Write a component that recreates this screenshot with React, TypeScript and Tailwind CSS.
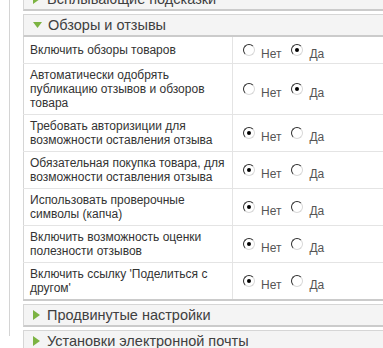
import React from "react";

type Row = { lines: string[]; yes: boolean };

const rows: Row[] = [
  { lines: ["Включить обзоры товаров"], yes: true },
  { lines: ["Автоматически одобрять", "публикацию отзывов и обзоров", "товара"], yes: true },
  { lines: ["Требовать авторизиции для", "возможности оставления отзыва"], yes: false },
  { lines: ["Обязательная покупка товара, для", "возможности оставления отзыва"], yes: false },
  { lines: ["Использовать проверочные", "символы (капча)"], yes: false },
  { lines: ["Включить возможность оценки", "полезности отзывов"], yes: false },
  { lines: ["Включить ссылку 'Поделиться с", "другом'"], yes: false },
];

function Radio({ checked }: { checked: boolean }) {
  return (
    <span className="flex w-[12px] h-[12px] shrink-0 items-center justify-center rounded-full border border-t-[#2e2e2e] border-l-[#2e2e2e] border-r-[#d8d8d8] border-b-[#d8d8d8] bg-white">
      {checked && <span className="block w-[4px] h-[4px] rounded-full bg-black" />}
    </span>
  );
}

function Arrow({ open }: { open?: boolean }) {
  return open ? (
    <svg width="9" height="6" viewBox="0 0 9 6" className="shrink-0">
      <polygon points="0,0 9,0 4.5,6" fill="#7cb342" />
    </svg>
  ) : (
    <svg width="7" height="10" viewBox="0 0 7 10" className="shrink-0">
      <polygon points="0,0 7,5 0,10" fill="#7cb342" />
    </svg>
  );
}

function PanelHeader({ title, open, className = "" }: { title: string; open?: boolean; className?: string }) {
  return (
    <div
      className={`flex items-center h-[23px] bg-[#f4f4f4] border-l border-t border-b-2 border-l-[#d6d6d6] border-t-[#d6d6d6] border-b-[#cbcbcb] pl-[9px] ${className}`}
    >
      <Arrow open={open} />
      <span className={`${open ? "ml-[6px]" : "ml-[7px]"} text-[14.5px] leading-[20px] text-[#404040]`}>{title}</span>
    </div>
  );
}

export default function App() {
  return (
    <div
      className="w-[383px] h-[348px] overflow-hidden bg-white"
      style={{ fontFamily: '"Liberation Sans", Arial, sans-serif' }}
    >
      <div className="ml-[9px] h-full border-l border-[#d4d4d4] pl-[13px]">
        <div className="w-[420px] -mt-[12px]">
          <PanelHeader title="Всплывающие подсказки" />
          <PanelHeader title="Обзоры и отзывы" open className="mt-[3px]" />
          <table className="w-full border-collapse border-l border-l-[#d6d6d6] border-b-2 border-b-[#cbcbcb]">
            <tbody>
              {rows.map((r, i) => (
                <tr key={i} className={i < rows.length - 1 ? "border-b border-[#e4e4e4]" : ""}>
                  <td className="w-[209px] px-[6px] py-[4px] align-middle text-[12px] leading-[14px] text-[#333333] border-r border-[#e4e4e4]">
                    {r.lines.map((l, j) => (
                      <div key={j} className="whitespace-nowrap">
                        {l}
                      </div>
                    ))}
                  </td>
                  <td className="pl-[10px] py-[6px] align-middle">
                    <div className="flex items-center text-[12px] leading-[14px] text-[#555555]">
                      <Radio checked={!r.yes} />
                      <span className="ml-[6px] translate-y-[4px]">Нет</span>
                      <span className="ml-[10px]">
                        <Radio checked={r.yes} />
                      </span>
                      <span className="ml-[6px] translate-y-[4px]">Да</span>
                    </div>
                  </td>
                </tr>
              ))}
            </tbody>
          </table>
          <PanelHeader title="Продвинутые настройки" className="mt-[3px]" />
          <PanelHeader title="Установки электронной почты" className="mt-[3px]" />
        </div>
      </div>
    </div>
  );
}
